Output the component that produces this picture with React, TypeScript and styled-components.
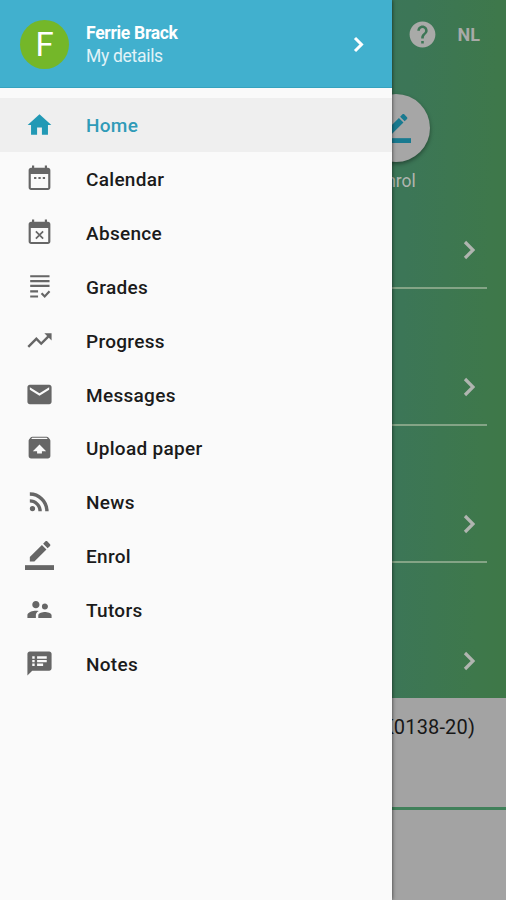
import React from "react";
import styled, { createGlobalStyle } from "styled-components";
import {
  MdTrendingUp,
  MdEmail,
  MdRssFeed,
  MdSupervisorAccount,
  MdSpeakerNotes,
  MdHelp,
} from "react-icons/md";

const GlobalStyle = createGlobalStyle`
  * { box-sizing: border-box; }
  body { margin: 0; font-family: Roboto, "Liberation Sans", sans-serif; }
`;

const Screen = styled.div`
  position: relative;
  width: 506px;
  height: 900px;
  overflow: hidden;
  background: #a3a3a3;
`;

const Dashboard = styled.main`
  display: flex;
  flex-direction: column;
  height: 698px;
  background: linear-gradient(92deg, #3b7762 0%, #3c7657 78%, #3e784b 94%, #3e7847 100%);
  color: #b0b5b0;
`;

const TopBar = styled.header`
  display: flex;
  flex: none;
  align-items: center;
  justify-content: flex-end;
  height: 68px;
  padding-right: 26px;
  gap: 20px;
  font-size: 18px;
  font-weight: 700;
  color: #a9aaa8;
`;

const Shortcuts = styled.div`
  display: flex;
  flex: none;
  justify-content: flex-end;
  height: 84px;
  padding: 26px 76px 0 0;
`;

const Shortcut = styled.div`
  display: flex;
  flex-direction: column;
  align-items: center;
  gap: 9px;
  width: 68px;
  font-size: 17.5px;
  line-height: 21px;
`;

const ShortcutDisc = styled.span`
  display: flex;
  flex: none;
  align-items: center;
  justify-content: center;
  width: 68px;
  height: 68px;
  border-radius: 50%;
  background: #a6a6a6;
  box-shadow: 0 2px 4px rgba(0, 0, 0, 0.4);
  color: #197a90;
`;

const Section = styled.section`
  display: flex;
  flex: none;
  align-items: flex-end;
  justify-content: flex-end;
  height: 137px;
  margin: 0 19px;
  padding: 0 12px 27px 0;
  border-bottom: 2px solid #84a486;

  &:last-child {
    border-bottom-color: transparent;
  }
`;

const Course = styled.div`
  display: flex;
  justify-content: flex-end;
  height: 112px;
  padding: 16px 31px 0 0;
  border-bottom: 3px solid #40805a;
  font-size: 20px;
  line-height: 26px;
  letter-spacing: 0.15px;
  color: #171717;
`;

const Drawer = styled.aside`
  position: absolute;
  inset: 0 auto 0 0;
  width: 392px;
  background: #fafafa;
  box-shadow: 0 0 4px rgba(0, 0, 0, 0.7);
`;

const Profile = styled.header`
  display: flex;
  align-items: center;
  height: 88px;
  padding: 1px 27px 0 20px;
  background: #41b0ce;
  border-bottom: 1px solid #36a3bf;
  color: #fff;
`;

const Avatar = styled.span`
  display: flex;
  align-items: center;
  justify-content: center;
  width: 49px;
  height: 49px;
  margin-right: 17px;
  border-radius: 50%;
  background: #74b729;
  font-size: 33px;
`;

const Identity = styled.div`
  flex: 1;
  font-size: 17.5px;
  line-height: 23px;
  padding-top: 2px;
`;

const Name = styled.div`
  font-weight: 700;
  letter-spacing: -0.3px;
`;

const Details = styled.div`
  color: #e1f3f8;
  letter-spacing: -0.3px;
`;

const Menu = styled.nav`
  padding-top: 10px;
`;

const MenuItem = styled.a<{ $active?: boolean }>`
  display: flex;
  align-items: center;
  height: 53.85px;
  padding-left: 25px;
  background: ${(p) => (p.$active ? "#efefef" : "transparent")};
  color: ${(p) => (p.$active ? "#309bb8" : "#1b1b1b")};
  font-size: 19px;
  font-weight: 500;
  letter-spacing: 0.3px;

  svg {
    flex: none;
    margin-right: 32px;
    color: ${(p) => (p.$active ? "#2299b5" : "#666")};
  }
`;

const MenuLabel = styled.span`
  padding-top: 2px;
`;

const Glyph = ({ size = 29, children }: { size?: number; children: React.ReactNode }) => (
  <svg width={size} height={size} viewBox="0 0 24 24" fill="currentColor">
    {children}
  </svg>
);

const HomeIcon = () => (
  <Glyph>
    <path d="M10 20.500v-6h4v6h5v-8h2.800L12 3.500 2.200 12.500H5v8z" />
  </Glyph>
);

const calendarFrame =
  "M19 3.2h-.8V1.300h-1.800v1.900H7.600V1.300H5.800v1.900H5c-1.100 0-2 .9-2 2v14.300c0 1.100.9 2 2 2h14c1.100 0 2-.9 2-2V5.200c0-1.100-.9-2-2-2zM19.200 19.800H4.800V8.300h14.400z";

const CalendarIcon = () => (
  <Glyph>
    <path fillRule="evenodd" d={calendarFrame} />
    <path d="M7.500 10.800h1.900v1.700H7.500zM11.100 10.800H13v1.700h-1.900zM14.700 10.800h1.900v1.700h-1.900z" />
  </Glyph>
);

const AbsenceIcon = () => (
  <Glyph>
    <path fillRule="evenodd" d={calendarFrame} />
    <path d="M9 11l6 6M15 11l-6 6" stroke="currentColor" strokeWidth="1.4" />
  </Glyph>
);

const GradesIcon = () => (
  <Glyph>
    <path d="M4.300 2.600h16v1.800h-16zM4.300 6.600h16v1.800h-16zM4.300 10.600h16v1.800h-16zM4.300 15.200h6.500V17H4.300zM4.300 19.400h6.500v1.800H4.300z" />
    <path d="M13.700 17.500l2.600 2.700 4-4.200" fill="none" stroke="currentColor" strokeWidth="1.800" />
  </Glyph>
);

const UploadIcon = () => (
  <Glyph>
    <path
      fillRule="evenodd"
      d="M20.550 5.220l-1.390-1.680C18.880 3.210 18.470 3 18 3H6c-.47 0-.88.21-1.150.55L3.460 5.220C3.170 5.570 3 6.010 3 6.500V19c0 1.100.89 2 2 2h14c1.100 0 2-.9 2-2V6.500c0-.49-.17-.93-.45-1.280zM12 9.500l5.500 5.500H14v2h-4v-2H6.500L12 9.500zM5.120 5l.82-1h12l.93 1H5.120z"
    />
  </Glyph>
);

const EnrolIcon = ({ size }: { size?: number }) => (
  <Glyph size={size}>
    <path d="M17.750 7L14 3.250l-10 10V17h3.750l10-10zm2.960-2.960c.39-.39.39-1.020 0-1.410L18.370.290c-.39-.39-1.020-.39-1.410 0L15 2.250 18.750 6l1.960-1.960z" />
    <path d="M0 20h24v4H0z" />
  </Glyph>
);

const Chevron = () => (
  <svg width="12" height="20" viewBox="0 0 12 20" fill="none" stroke="currentColor" strokeWidth="3.200">
    <path d="M2 2l8 8-8 8" />
  </svg>
);

const ProfileChevron = () => (
  <svg width="13" height="20" viewBox="0 0 13 20" fill="none" stroke="currentColor" strokeWidth="3">
    <path d="M3 4l6.500 6.500L3 17" />
  </svg>
);

const items = [
  { label: "Home", icon: <HomeIcon /> },
  { label: "Calendar", icon: <CalendarIcon /> },
  { label: "Absence", icon: <AbsenceIcon /> },
  { label: "Grades", icon: <GradesIcon /> },
  { label: "Progress", icon: <MdTrendingUp size={29} /> },
  { label: "Messages", icon: <MdEmail size={29} /> },
  { label: "Upload paper", icon: <UploadIcon /> },
  { label: "News", icon: <MdRssFeed size={29} /> },
  { label: "Enrol", icon: <EnrolIcon /> },
  { label: "Tutors", icon: <MdSupervisorAccount size={29} /> },
  { label: "Notes", icon: <MdSpeakerNotes size={29} /> },
];

export default function App() {
  return (
    <Screen>
      <GlobalStyle />
      <Dashboard>
        <TopBar>
          <MdHelp size={31} />
          <span>NL</span>
        </TopBar>
        <Shortcuts>
          <Shortcut>
            <ShortcutDisc>
              <EnrolIcon size={29} />
            </ShortcutDisc>
            Enrol
          </Shortcut>
        </Shortcuts>
        {[0, 1, 2, 3].map((n) => (
          <Section key={n}>
            <Chevron />
          </Section>
        ))}
      </Dashboard>
      <Course>(K0138-20)</Course>
      <Drawer>
        <Profile>
          <Avatar>F</Avatar>
          <Identity>
            <Name>Ferrie Brack</Name>
            <Details>My details</Details>
          </Identity>
          <ProfileChevron />
        </Profile>
        <Menu>
          {items.map(({ label, icon }, i) => (
            <MenuItem key={label} $active={i === 0}>
              {icon}
              <MenuLabel>{label}</MenuLabel>
            </MenuItem>
          ))}
        </Menu>
      </Drawer>
    </Screen>
  );
}
